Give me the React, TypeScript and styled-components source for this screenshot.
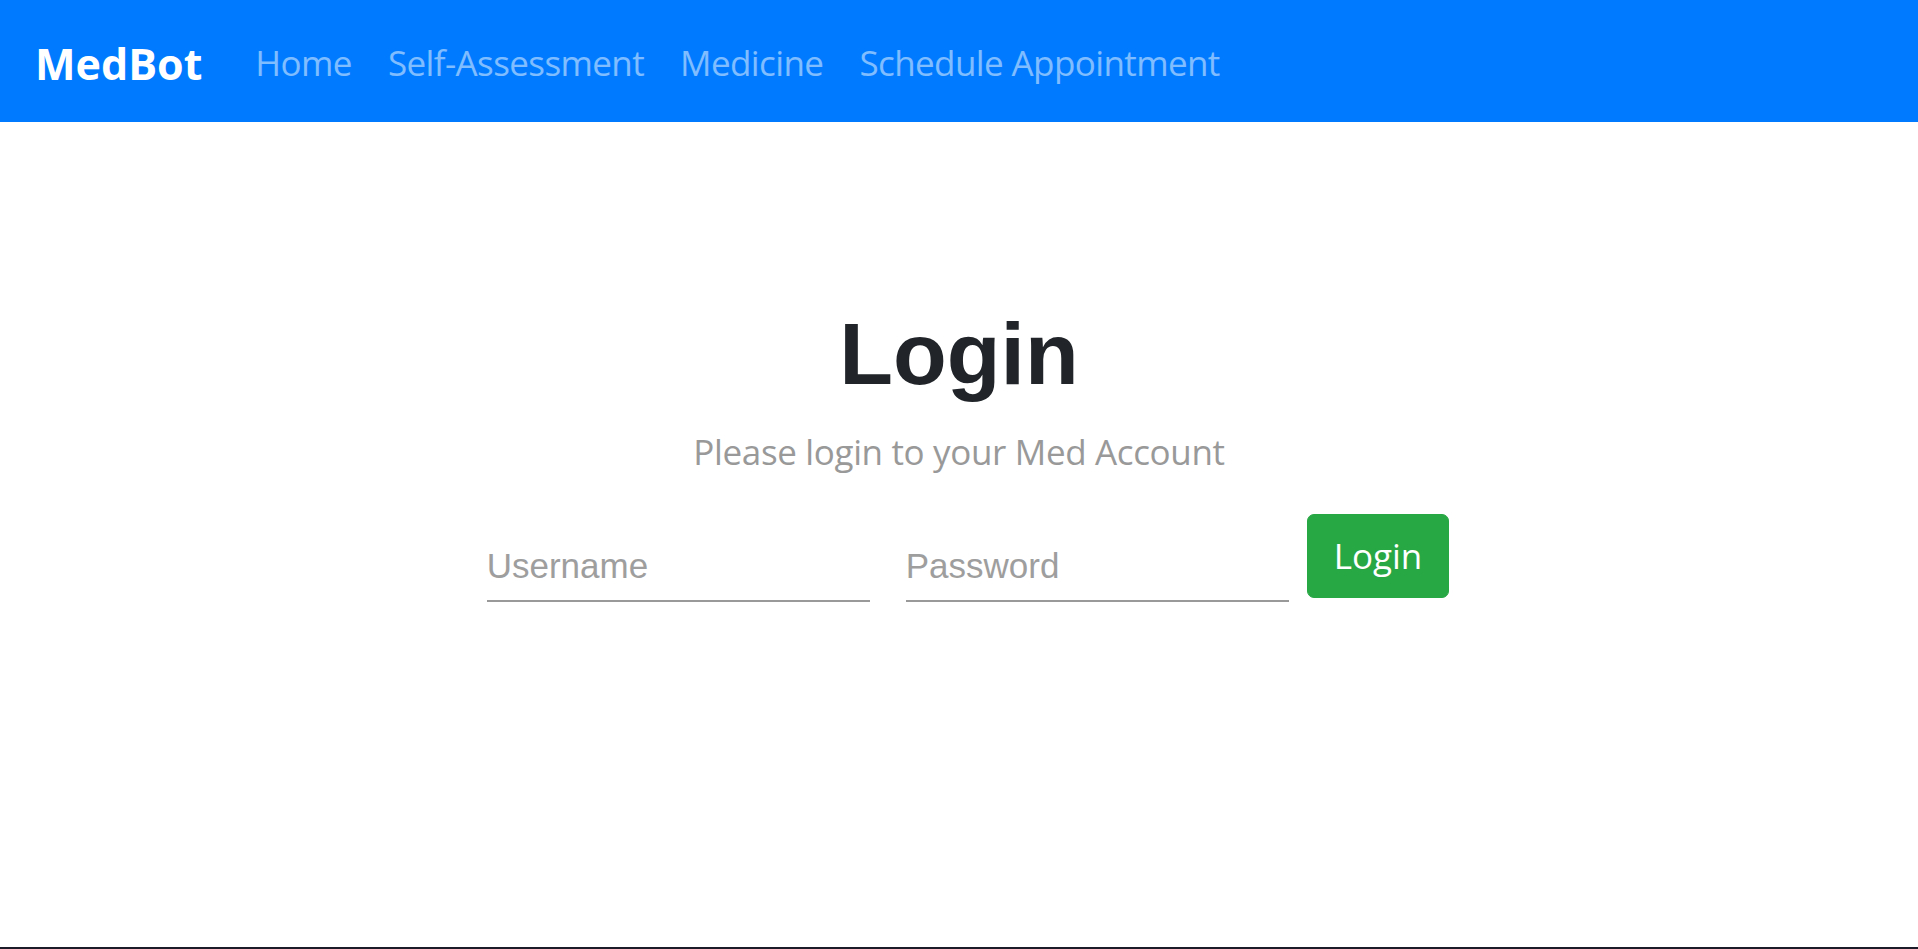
import React from "react";
import styled, { createGlobalStyle } from "styled-components";

const GlobalStyle = createGlobalStyle`
  html, body {
    margin: 0;
    padding: 0;
    background: #ffffff;
  }
  * { box-sizing: border-box; }
`;

const Page = styled.div`
  min-height: 949px;
  display: flex;
  flex-direction: column;
  font-family: "Open Sans", "Noto Sans", sans-serif;
  color: #212529;
`;

const NavBar = styled.nav`
  height: 122px;
  background: #007bff;
  display: flex;
  align-items: center;
  padding: 0 35px;
`;

const Brand = styled.a`
  font-family: "Open Sans", sans-serif;
  font-weight: 700;
  font-size: 43px;
  color: #ffffff;
  text-decoration: none;
  margin-right: 35px;
  line-height: 1;
  padding-top: 4px;
`;

const NavList = styled.ul`
  display: flex;
  list-style: none;
  margin: 0;
  padding: 0;
`;

const NavLink = styled.a`
  display: block;
  padding: 2px 18px 0;
  font-size: 35px;
  letter-spacing: -0.6px;
  color: rgba(255, 255, 255, 0.5);
  text-decoration: none;
  line-height: 1;
`;

const Main = styled.main`
  display: flex;
  flex-direction: column;
  align-items: center;
  padding-top: 179px;
`;

const Title = styled.h1`
  margin: 0;
  font-family: "Liberation Sans", Arial, sans-serif;
  font-weight: 700;
  font-size: 88px;
  line-height: 1.2;
  color: #212529;
`;

const Subtitle = styled.p`
  margin: 19px 0 0;
  font-size: 35px;
  letter-spacing: -0.35px;
  line-height: 1.5;
  color: #999999;
`;

const Form = styled.form`
  display: flex;
  align-items: flex-start;
  margin-top: 36px;
`;

const Field = styled.input`
  width: 383px;
  height: 88px;
  margin: 0 18px;
  padding: 17px 0 0;
  border: none;
  border-bottom: 2px solid #999999;
  outline: none;
  background: transparent;
  font-family: "Liberation Sans", Arial, sans-serif;
  font-size: 35px;
  color: #495057;
  &::placeholder {
    color: #9e9e9e;
  }
`;

const SubmitButton = styled.button`
  height: 84px;
  padding: 0 26px;
  border: 1px solid #28a745;
  border-radius: 7px;
  background: #28a745;
  color: #ffffff;
  font-family: "Open Sans", sans-serif;
  font-size: 35px;
  line-height: 1.5;
  cursor: pointer;
`;

const BottomEdge = styled.div`
  margin-top: auto;
  height: 2px;
  background: #1c1b29;
`;

export default function App() {
  const links = ["Home", "Self-Assessment", "Medicine", "Schedule Appointment"];
  return (
    <>
      <GlobalStyle />
      <Page>
        <NavBar>
          <Brand href="#">MedBot</Brand>
          <NavList>
            {links.map((l) => (
              <li key={l}>
                <NavLink href="#">{l}</NavLink>
              </li>
            ))}
          </NavList>
        </NavBar>
        <Main>
          <Title>Login</Title>
          <Subtitle>Please login to your Med Account</Subtitle>
          <Form onSubmit={(e) => e.preventDefault()}>
            <Field type="text" placeholder="Username" />
            <Field type="password" placeholder="Password" />
            <SubmitButton type="submit">Login</SubmitButton>
          </Form>
        </Main>
        <BottomEdge />
      </Page>
    </>
  );
}
